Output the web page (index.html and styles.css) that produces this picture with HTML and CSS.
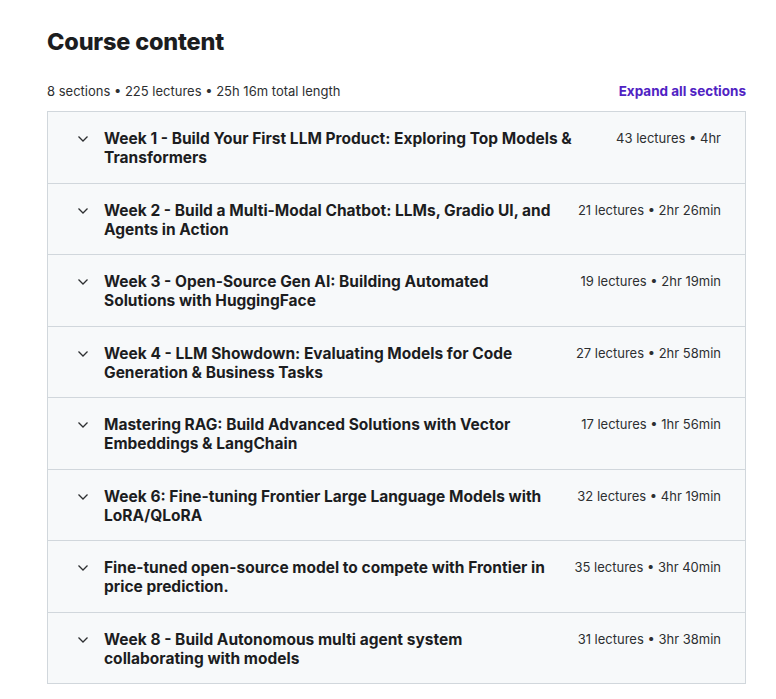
FILE: index.html
```html
<!DOCTYPE html>
<html>
<head>
<meta charset="utf-8">
<link rel="stylesheet" href="styles.css">
</head>
<body>
<div class="page">
  <h2 class="title">Course content</h2>
  <div class="meta">
    <span class="summary">8 sections • 225 lectures • 25h 16m total length</span>
    <button class="expand">Expand all sections</button>
  </div>
  <div class="sections">
    <div class="row">
      <svg class="chev" viewBox="0 0 12 8" width="12" height="8"><polyline points="1.5,1.5 6,6 10.5,1.5" /></svg>
      <div class="name">Week 1 - Build Your First LLM Product: Exploring Top Models &amp; Transformers</div>
      <div class="info">43 lectures • 4hr</div>
    </div>
    <div class="row">
      <svg class="chev" viewBox="0 0 12 8" width="12" height="8"><polyline points="1.5,1.5 6,6 10.5,1.5" /></svg>
      <div class="name">Week 2 - Build a Multi-Modal Chatbot: LLMs, Gradio UI, and Agents in Action</div>
      <div class="info">21 lectures • 2hr 26min</div>
    </div>
    <div class="row">
      <svg class="chev" viewBox="0 0 12 8" width="12" height="8"><polyline points="1.5,1.5 6,6 10.5,1.5" /></svg>
      <div class="name">Week 3 - Open-Source Gen AI: Building Automated Solutions with HuggingFace</div>
      <div class="info">19 lectures • 2hr 19min</div>
    </div>
    <div class="row">
      <svg class="chev" viewBox="0 0 12 8" width="12" height="8"><polyline points="1.5,1.5 6,6 10.5,1.5" /></svg>
      <div class="name">Week 4 - LLM Showdown: Evaluating Models for Code Generation &amp; Business Tasks</div>
      <div class="info">27 lectures • 2hr 58min</div>
    </div>
    <div class="row">
      <svg class="chev" viewBox="0 0 12 8" width="12" height="8"><polyline points="1.5,1.5 6,6 10.5,1.5" /></svg>
      <div class="name">Mastering RAG: Build Advanced Solutions with Vector Embeddings &amp; LangChain</div>
      <div class="info">17 lectures • 1hr 56min</div>
    </div>
    <div class="row">
      <svg class="chev" viewBox="0 0 12 8" width="12" height="8"><polyline points="1.5,1.5 6,6 10.5,1.5" /></svg>
      <div class="name">Week 6: Fine-tuning Frontier Large Language Models with LoRA/QLoRA</div>
      <div class="info">32 lectures • 4hr 19min</div>
    </div>
    <div class="row">
      <svg class="chev" viewBox="0 0 12 8" width="12" height="8"><polyline points="1.5,1.5 6,6 10.5,1.5" /></svg>
      <div class="name">Fine-tuned open-source model to compete with Frontier in price prediction.</div>
      <div class="info">35 lectures • 3hr 40min</div>
    </div>
    <div class="row">
      <svg class="chev" viewBox="0 0 12 8" width="12" height="8"><polyline points="1.5,1.5 6,6 10.5,1.5" /></svg>
      <div class="name">Week 8 - Build Autonomous multi agent system collaborating with models</div>
      <div class="info">31 lectures • 3hr 38min</div>
    </div>
  </div>
</div>
</body>
</html>
```
FILE: styles.css
```css
html, body {
  margin: 0;
  padding: 0;
  background: #ffffff;
}
body {
  font-family: Inter, "Noto Sans", sans-serif;
  color: #2d2f31;
}
.page {
  width: 699px;
  margin-left: 47px;
  padding-top: 27px;
}
.title {
  margin: 0;
  font-size: 23.5px;
  line-height: 30px;
  font-weight: 800;
  color: #1c1d1f;
  letter-spacing: -0.2px;
}
.meta {
  display: flex;
  justify-content: space-between;
  align-items: center;
  margin-top: 20px;
  height: 28px;
  margin-bottom: 6px;
}
.summary {
  font-size: 13px;
  color: #2d2f31;
}
.expand {
  border: 0;
  background: none;
  padding: 0;
  font-family: inherit;
  font-size: 13.5px;
  font-weight: 700;
  color: #5022c3;
  cursor: pointer;
}
.sections {
  border: 1px solid #d1d7dc;
  border-bottom: 0;
}
.row {
  display: flex;
  align-items: flex-start;
  background: #f7f9fa;
  border-bottom: 1px solid #d1d7dc;
  padding: 17px 24px 15px 29px;
  height: 38.5px;
}
.chev {
  flex: none;
  margin-top: 6px;
  margin-right: 15px;
  fill: none;
  stroke: #2d2f31;
  stroke-width: 1.3;
}
.name {
  flex: 1;
  font-size: 15.5px;
  line-height: 19.25px;
  font-weight: 700;
  color: #1c1d1f;
}
.info {
  flex: none;
  margin-left: 24px;
  font-size: 13px;
  line-height: 19.25px;
  color: #2d2f31;
}
```
